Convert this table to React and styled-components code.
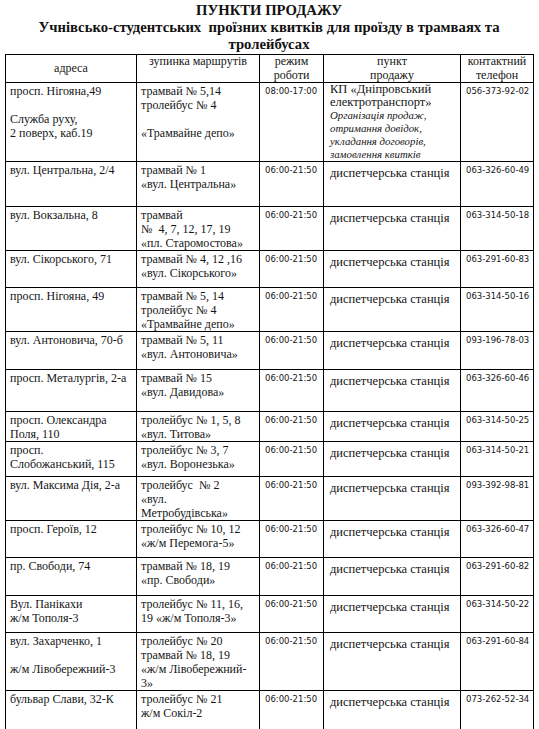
import React from 'react';
import styled, { createGlobalStyle } from 'styled-components';

const Global = createGlobalStyle`
  html, body {
    margin: 0;
    padding: 0;
    background: #fff;
  }
  body {
    font-family: "Liberation Serif", "DejaVu Serif", serif;
    color: #111;
  }
`;

const Page = styled.div`
  width: 539px;
  padding: 2px 6px 4px 5px;
  box-sizing: border-box;
`;

const Title = styled.h1`
  margin: 0;
  font-family: "Liberation Serif", "DejaVu Serif", serif;
  font-weight: bold;
  font-size: 14.7px;
  line-height: 17px;
  text-align: center;
  color: #111;
  white-space: pre;
`;

const Table = styled.table`
  width: 528px;
  table-layout: fixed;
  border-collapse: collapse;
  margin-top: 1px;
`;

const Row = styled.tr`
  height: ${p => p.$h}px;
`;

const Cell = styled.td`
  border: 1px solid #000;
  vertical-align: top;
  padding: 1px 3px 0 4px;
  font-family: "Liberation Serif", "DejaVu Serif", serif;
  font-size: 12px;
  line-height: 14px;
  color: #151515;
  white-space: pre-wrap;
`;

const HeadCell = styled(Cell).attrs({ as: 'th' })`
  font-weight: normal;
  text-align: center;
  vertical-align: ${p => p.$middle ? 'middle' : 'top'};
  padding: 0 2px;
  line-height: 13.5px;
`;

const TimeCell = styled(Cell)`
  font-family: "DejaVu Sans", "Liberation Sans", sans-serif;
  font-size: 8.5px;
  line-height: 12px;
  padding: 2px 0 0 5px;
`;

const PointCell = styled(Cell)`
  font-size: 12.5px;
  line-height: ${p => p.$tight ? 13 : 14}px;
  padding: ${p => p.$tight ? 0 : 4}px 3px 0 6px;
`;

const PhoneCell = styled(TimeCell)`
  padding: 2px 0 0 5px;
`;

const Note = styled.div`
  font-style: italic;
  font-size: 10.8px;
  line-height: 13px;
`;

const Line = styled.div`
  min-height: 14px;
`;

const rows = [
  {
    h: 79,
    addr: ['просп. Нігояна,49', '', 'Служба руху,', '2 поверх, каб.19'],
    stops: ['трамвай № 5,14', 'тролейбус № 4', '', '«Трамвайне депо»'],
    time: '08:00-17:00',
    phone: '056-373-92-02',
    main: true,
  },
  { h: 45, addr: ['вул. Центральна, 2/4'], stops: ['трамвай № 1', '«вул. Центральна»'], phone: '063-326-60-49' },
  { h: 43, addr: ['вул. Вокзальна, 8'], stops: ['трамвай', '№  4, 7, 12, 17, 19', '«пл. Старомостова»'], phone: '063-314-50-18' },
  { h: 37, addr: ['вул. Сікорського, 71'], stops: ['трамвай № 4, 12 ,16', '«вул. Сікорського»'], phone: '063-291-60-83' },
  { h: 42, addr: ['просп. Нігояна, 49'], stops: ['трамвай № 5, 14', 'тролейбус № 4', '«Трамвайне депо»'], phone: '063-314-50-16' },
  { h: 38, addr: ['вул. Антоновича, 70-б'], stops: ['трамвай № 5, 11', '«вул. Антоновича»'], phone: '093-196-78-03' },
  { h: 42, addr: ['просп. Металургів, 2-а'], stops: ['трамвай № 15', '«вул. Давидова»'], phone: '063-326-60-46' },
  { h: 30, addr: ['просп. Олександра', 'Поля, 110'], stops: ['тролейбус № 1, 5, 8', '«вул. Титова»'], phone: '063-314-50-25' },
  { h: 35, addr: ['просп.', 'Слобожанський, 115'], stops: ['тролейбус № 3, 7', '«вул. Воронезька»'], phone: '063-314-50-21' },
  { h: 43, addr: ['вул. Максима Дія, 2-а'], stops: ['тролейбус  № 2', '«вул.', 'Метробудівська»'], phone: '093-392-98-81' },
  { h: 37, addr: ['просп. Героїв, 12'], stops: ['тролейбус № 10, 12', '«ж/м Перемога-5»'], phone: '063-326-60-47' },
  { h: 38, addr: ['пр. Свободи, 74'], stops: ['трамвай № 18, 19', '«пр. Свободи»'], phone: '063-291-60-82' },
  { h: 37, addr: ['Вул. Панікахи', 'ж/м Тополя-3'], stops: ['тролейбус № 11, 16,', '19 «ж/м Тополя-3»'], phone: '063-314-50-22' },
  {
    h: 58,
    addr: ['вул. Захарченко, 1', '', 'ж/м Лівобережний-3'],
    stops: ['тролейбус № 20', 'трамвай № 18, 19', '«ж/м Лівобережний-', '3»'],
    phone: '063-291-60-84',
  },
  { h: 40, addr: ['бульвар Слави, 32-К'], stops: ['тролейбус № 21', 'ж/м Сокіл-2'], phone: '073-262-52-34' },
];

const Lines = ({ items }) => items.map((t, i) => <Line key={i}>{t}</Line>);

export default function App() {
  return (
    <Page>
      <Global />
      <Title>
        ПУНКТИ ПРОДАЖУ{'\n'}
        Учнівсько-студентських  проїзних квитків для проїзду в трамваях та{'\n'}
        тролейбусах
      </Title>
      <Table>
        <colgroup>
          <col style={{ width: 131 }} />
          <col style={{ width: 123 }} />
          <col style={{ width: 64 }} />
          <col style={{ width: 137 }} />
          <col style={{ width: 73 }} />
        </colgroup>
        <thead>
          <Row $h={28}>
            <HeadCell $middle>адреса</HeadCell>
            <HeadCell>зупинка маршрутів</HeadCell>
            <HeadCell>режим<br />роботи</HeadCell>
            <HeadCell>пункт<br />продажу</HeadCell>
            <HeadCell>контактний<br />телефон</HeadCell>
          </Row>
        </thead>
        <tbody>
          {rows.map((r, i) => (
            <Row key={i} $h={r.h}>
              <Cell><Lines items={r.addr} /></Cell>
              <Cell><Lines items={r.stops} /></Cell>
              <TimeCell>{r.time || '06:00-21:50'}</TimeCell>
              {r.main ? (
                <PointCell $tight>
                  КП «Дніпровський<br />
                  електротранспорт»
                  <Note>
                    Організація продаж,<br />
                    отримання довідок,<br />
                    укладання договорів,<br />
                    замовлення квитків
                  </Note>
                </PointCell>
              ) : (
                <PointCell>диспетчерська станція</PointCell>
              )}
              <PhoneCell>{r.phone}</PhoneCell>
            </Row>
          ))}
        </tbody>
      </Table>
    </Page>
  );
}
